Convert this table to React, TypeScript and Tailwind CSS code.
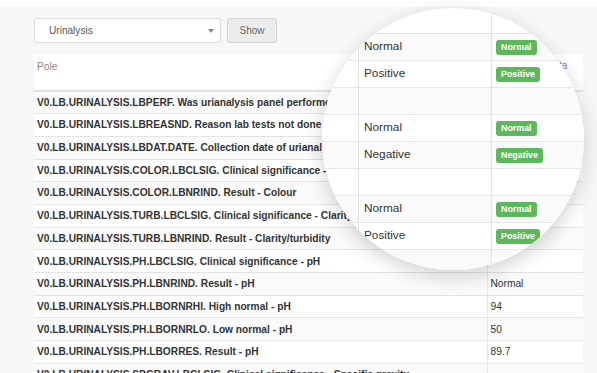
import React from "react";

type Row = { field: string; value: string };

const rows: Row[] = [
  { field: "V0.LB.URINALYSIS.LBPERF. Was urianalysis panel performed?", value: "" },
  { field: "V0.LB.URINALYSIS.LBREASND. Reason lab tests not done", value: "" },
  { field: "V0.LB.URINALYSIS.LBDAT.DATE. Collection date of urianalysis", value: "" },
  { field: "V0.LB.URINALYSIS.COLOR.LBCLSIG. Clinical significance - Colour", value: "" },
  { field: "V0.LB.URINALYSIS.COLOR.LBNRIND. Result - Colour", value: "" },
  { field: "V0.LB.URINALYSIS.TURB.LBCLSIG. Clinical significance - Clarity/turbidity", value: "" },
  { field: "V0.LB.URINALYSIS.TURB.LBNRIND. Result - Clarity/turbidity", value: "" },
  { field: "V0.LB.URINALYSIS.PH.LBCLSIG. Clinical significance - pH", value: "" },
  { field: "V0.LB.URINALYSIS.PH.LBNRIND. Result - pH", value: "Normal" },
  { field: "V0.LB.URINALYSIS.PH.LBORNRHI. High normal - pH", value: "94" },
  { field: "V0.LB.URINALYSIS.PH.LBORNRLO. Low normal - pH", value: "50" },
  { field: "V0.LB.URINALYSIS.PH.LBORRES. Result - pH", value: "89.7" },
  { field: "V0.LB.URINALYSIS.SPGRAV.LBCLSIG. Clinical significance - Specific gravity", value: "" },
];

const lensRows: string[] = [
  "Normal",
  "Positive",
  "",
  "Normal",
  "Negative",
  "",
  "Normal",
  "Positive",
  "",
];

function Badge({ text }: { text: string }) {
  return (
    <span className="inline-flex h-[15px] items-center rounded-[3px] bg-[#5cb85c] px-[5px] text-[8.9px] font-bold leading-none text-white">
      {text}
    </span>
  );
}

function Lens() {
  return (
    <div className="absolute left-[322px] top-[8px] h-[262px] w-[262px] overflow-hidden rounded-full bg-white shadow-[0_6px_20px_rgba(0,0,0,0.18)]">
      <div className="flex h-[26px] border-b border-[#e2e2e2]">
        <div className="w-[37px] shrink-0 border-r border-[#e2e2e2]" />
        <div className="w-[133px] shrink-0 border-r border-[#e2e2e2]" />
        <div className="flex-1" />
      </div>
      {lensRows.map((v, i) => (
        <div
          key={i}
          className={`flex h-[27px] border-b border-[#e6e6e6] ${i % 2 === 0 ? "bg-[#fafafa]" : "bg-white"}`}
        >
          <div className="w-[37px] shrink-0 border-r border-[#e2e2e2]" />
          <div className="flex w-[133px] shrink-0 items-center border-r border-[#e2e2e2] pl-[5px] text-[11.8px] text-[#333]">
            {v}
          </div>
          <div className="flex flex-1 items-center pl-[4px]">{v && <Badge text={v} />}</div>
        </div>
      ))}
    </div>
  );
}

export default function App() {
  return (
    <div className="relative h-[373px] w-[597px] overflow-hidden bg-[#f7f7f7] font-['Liberation_Sans',Arial,sans-serif]">
      <div className="h-[7px] bg-white" />

      <div className="flex gap-[6px] pl-[34px] pt-[11px]">
        <div className="relative flex h-[25px] w-[187px] items-center rounded-[3px] border border-[#dcdcdc] bg-white pl-[14px] text-[10.1px] text-[#555]">
          Urinalysis
          <span className="absolute right-[6px] top-[10px] h-0 w-0 border-x-[3px] border-t-[4px] border-x-transparent border-t-[#888]" />
        </div>
        <div className="flex h-[25px] w-[50px] items-center justify-center rounded-[3px] border border-[#d5d5d5] bg-[#ececec] text-[10px] text-[#666]">
          Show
        </div>
      </div>

      <div className="ml-[34px] mt-[11px] w-[549px] bg-white text-[10.2px] text-[#333]">
        <div className="flex h-[37.5px] border-b-2 border-[#e2e2e2]">
          <div className="w-[453.5px] shrink-0 border-r border-[#e6e6e6] pl-[3px] pt-[5px] text-[#888]">Pole</div>
          <div className="flex-1 pl-[3px] pt-[4px] text-[#888]">Uložená hodnota</div>
        </div>
        {rows.map((r, i) => (
          <div
            key={i}
            className={`flex h-[22.7px] items-center border-b border-[#e4e4e4] ${i % 2 === 0 ? "bg-[#fafafa]" : "bg-white"}`}
          >
            <div className="flex h-full w-[453.5px] shrink-0 items-center whitespace-nowrap border-r border-[#e6e6e6] pl-[3px] font-bold">
              {r.field}
            </div>
            <div className="flex h-full flex-1 items-center pl-[3px]">{r.value}</div>
          </div>
        ))}
      </div>

      <Lens />
    </div>
  );
}
